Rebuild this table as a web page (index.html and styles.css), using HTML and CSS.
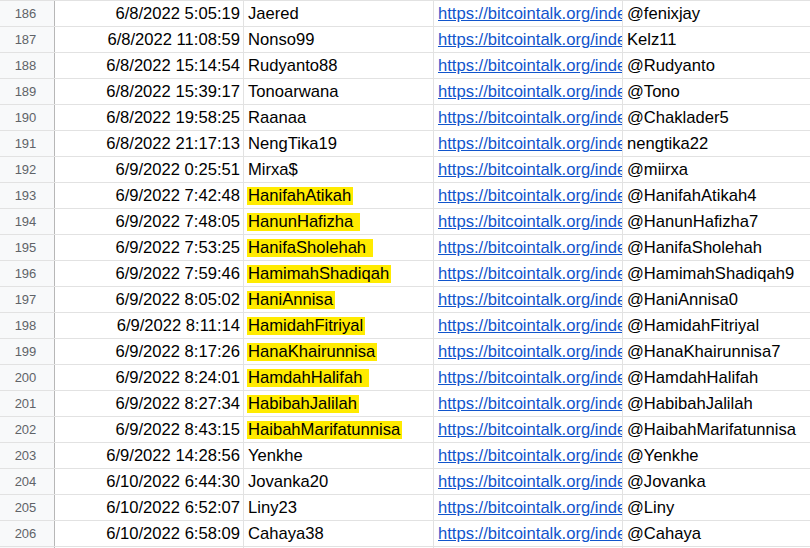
FILE: index.html
```html
<!DOCTYPE html>
<html>
<head>
<meta charset="utf-8">
<link rel="stylesheet" href="styles.css">
</head>
<body>
<div class="sheet">
  <div class="row"><div class="rh">186</div><div class="c ts">6/8/2022 5:05:19</div><div class="c nm">Jaered</div><div class="c ln"><a>https://bitcointalk.org/index.php?action=profile</a></div><div class="c tg">@fenixjay</div></div>
  <div class="row"><div class="rh">187</div><div class="c ts">6/8/2022 11:08:59</div><div class="c nm">Nonso99</div><div class="c ln"><a>https://bitcointalk.org/index.php?action=profile</a></div><div class="c tg">Kelz11</div></div>
  <div class="row"><div class="rh">188</div><div class="c ts">6/8/2022 15:14:54</div><div class="c nm">Rudyanto88</div><div class="c ln"><a>https://bitcointalk.org/index.php?action=profile</a></div><div class="c tg">@Rudyanto</div></div>
  <div class="row"><div class="rh">189</div><div class="c ts">6/8/2022 15:39:17</div><div class="c nm">Tonoarwana</div><div class="c ln"><a>https://bitcointalk.org/index.php?action=profile</a></div><div class="c tg">@Tono</div></div>
  <div class="row"><div class="rh">190</div><div class="c ts">6/8/2022 19:58:25</div><div class="c nm">Raanaa</div><div class="c ln"><a>https://bitcointalk.org/index.php?action=profile</a></div><div class="c tg">@Chaklader5</div></div>
  <div class="row"><div class="rh">191</div><div class="c ts">6/8/2022 21:17:13</div><div class="c nm">NengTika19</div><div class="c ln"><a>https://bitcointalk.org/index.php?action=profile</a></div><div class="c tg">nengtika22</div></div>
  <div class="row"><div class="rh">192</div><div class="c ts">6/9/2022 0:25:51</div><div class="c nm">Mirxa$</div><div class="c ln"><a>https://bitcointalk.org/index.php?action=profile</a></div><div class="c tg">@miirxa</div></div>
  <div class="row"><div class="rh">193</div><div class="c ts">6/9/2022 7:42:48</div><div class="c nm"><span class="hl">HanifahAtikah</span></div><div class="c ln"><a>https://bitcointalk.org/index.php?action=profile</a></div><div class="c tg">@HanifahAtikah4</div></div>
  <div class="row"><div class="rh">194</div><div class="c ts">6/9/2022 7:48:05</div><div class="c nm"><span class="hl sp">HanunHafizha</span></div><div class="c ln"><a>https://bitcointalk.org/index.php?action=profile</a></div><div class="c tg">@HanunHafizha7</div></div>
  <div class="row"><div class="rh">195</div><div class="c ts">6/9/2022 7:53:25</div><div class="c nm"><span class="hl sp">HanifaSholehah</span></div><div class="c ln"><a>https://bitcointalk.org/index.php?action=profile</a></div><div class="c tg">@HanifaSholehah</div></div>
  <div class="row"><div class="rh">196</div><div class="c ts">6/9/2022 7:59:46</div><div class="c nm"><span class="hl">HamimahShadiqah</span></div><div class="c ln"><a>https://bitcointalk.org/index.php?action=profile</a></div><div class="c tg">@HamimahShadiqah9</div></div>
  <div class="row"><div class="rh">197</div><div class="c ts">6/9/2022 8:05:02</div><div class="c nm"><span class="hl">HaniAnnisa</span></div><div class="c ln"><a>https://bitcointalk.org/index.php?action=profile</a></div><div class="c tg">@HaniAnnisa0</div></div>
  <div class="row"><div class="rh">198</div><div class="c ts">6/9/2022 8:11:14</div><div class="c nm"><span class="hl">HamidahFitriyal</span></div><div class="c ln"><a>https://bitcointalk.org/index.php?action=profile</a></div><div class="c tg">@HamidahFitriyal</div></div>
  <div class="row"><div class="rh">199</div><div class="c ts">6/9/2022 8:17:26</div><div class="c nm"><span class="hl">HanaKhairunnisa</span></div><div class="c ln"><a>https://bitcointalk.org/index.php?action=profile</a></div><div class="c tg">@HanaKhairunnisa7</div></div>
  <div class="row"><div class="rh">200</div><div class="c ts">6/9/2022 8:24:01</div><div class="c nm"><span class="hl sp">HamdahHalifah</span></div><div class="c ln"><a>https://bitcointalk.org/index.php?action=profile</a></div><div class="c tg">@HamdahHalifah</div></div>
  <div class="row"><div class="rh">201</div><div class="c ts">6/9/2022 8:27:34</div><div class="c nm"><span class="hl">HabibahJalilah</span></div><div class="c ln"><a>https://bitcointalk.org/index.php?action=profile</a></div><div class="c tg">@HabibahJalilah</div></div>
  <div class="row"><div class="rh">202</div><div class="c ts">6/9/2022 8:43:15</div><div class="c nm"><span class="hl">HaibahMarifatunnisa</span></div><div class="c ln"><a>https://bitcointalk.org/index.php?action=profile</a></div><div class="c tg">@HaibahMarifatunnisa</div></div>
  <div class="row"><div class="rh">203</div><div class="c ts">6/9/2022 14:28:56</div><div class="c nm">Yenkhe</div><div class="c ln"><a>https://bitcointalk.org/index.php?action=profile</a></div><div class="c tg">@Yenkhe</div></div>
  <div class="row"><div class="rh">204</div><div class="c ts">6/10/2022 6:44:30</div><div class="c nm">Jovanka20</div><div class="c ln"><a>https://bitcointalk.org/index.php?action=profile</a></div><div class="c tg">@Jovanka</div></div>
  <div class="row"><div class="rh">205</div><div class="c ts">6/10/2022 6:52:07</div><div class="c nm">Liny23</div><div class="c ln"><a>https://bitcointalk.org/index.php?action=profile</a></div><div class="c tg">@Liny</div></div>
  <div class="row"><div class="rh">206</div><div class="c ts">6/10/2022 6:58:09</div><div class="c nm">Cahaya38</div><div class="c ln"><a>https://bitcointalk.org/index.php?action=profile</a></div><div class="c tg">@Cahaya</div></div>
  <div class="row"><div class="rh"></div><div class="c ts"></div><div class="c nm"></div><div class="c ln"></div><div class="c tg"></div></div>
</div>
</body>
</html>
```

FILE: styles.css
```css
html, body {
  margin: 0;
  padding: 0;
  background: #ffffff;
  overflow: hidden;
}
.sheet {
  width: 810px;
  font-family: "Liberation Sans", Arial, sans-serif;
  font-size: 16.6px;
  color: #000000;
}
.row {
  display: grid;
  grid-template-columns: 55px 189px 190px 189px 1fr;
  height: 26px;
  box-sizing: border-box;
  border-top: 1px solid #e2e2e2;
}
.rh {
  background: #f8f9fa;
  border-right: 1px solid #b7b7b7;
  color: #5f6368;
  font-size: 13px;
  text-align: center;
  line-height: 25px;
  padding-right: 3px;
  box-sizing: border-box;
}
.c {
  border-right: 1px solid #e2e2e2;
  line-height: 25px;
  white-space: nowrap;
  overflow: hidden;
  text-overflow: clip;
  box-sizing: border-box;
}
.ts {
  text-align: right;
  padding-right: 3px;
}
.nm {
  padding-left: 4px;
}
.ln {
  padding-left: 4px;
}
.ln a {
  color: #1155cc;
  text-decoration: underline;
}
.tg {
  padding-left: 4px;
  border-right: none;
}
.hl {
  display: inline-block;
  background: #ffeb00;
  line-height: 18px;
  padding: 0 2px 0 1px;
  margin-left: -1px;
}
.hl.sp {
  padding-right: 7px;
}
```
